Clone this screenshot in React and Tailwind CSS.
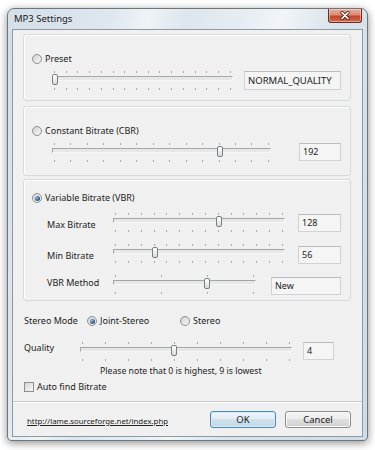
import React from 'react'

const Radio = ({ checked }) => (
  <span className="w-[10px] h-[10px] shrink-0 rounded-full border border-[#8c8e90] bg-linear-to-br from-[#cfd1d3] to-[#f9f9f9] flex items-center justify-center">
    {checked && (
      <span className="w-[5px] h-[5px] rounded-full bg-[radial-gradient(circle_at_35%_35%,#8dbbe6,#234f78_70%)]" />
    )}
  </span>
)

const Ticks = ({ count }) => (
  <div className="flex justify-between px-[2px]">
    {Array.from({ length: count }).map((_, i) => (
      <span key={i} className="w-px h-[2px] bg-[#a9abad]" />
    ))}
  </div>
)

// track + ticks, the thumb sits over the track
const Slider = ({ className, ticks, thumb }) => (
  <div className={`relative h-[20px] shrink-0 ${className}`}>
    <Ticks count={ticks} />
    <div className="mt-[3px] h-[5px] border border-[#a3a5a6] border-b-[#f7f7f7] border-r-[#f7f7f7] bg-[#e6e8e8]" />
    <div className="mt-[7px]">
      <Ticks count={ticks} />
    </div>
    <div
      className="absolute top-[3px] w-[6px] h-[11px] rounded-[2px] border border-[#7c7f82] bg-linear-to-b from-white to-[#d9dbdd]"
      style={{ left: thumb }}
    />
  </div>
)

const Field = ({ className, children }) => (
  <div className={`h-[18px] shrink-0 border border-[#d0d2d3] border-t-[#b9bbbd] bg-[#f5f5f5] pl-[3px] flex items-center ${className}`}>
    {children}
  </div>
)

const Group = ({ className, children }) => (
  <div className={`ml-[10px] w-[328px] shrink-0 rounded-[3px] border border-[#d6dadd] shadow-[inset_1px_1px_0_#ffffff] flex flex-col ${className}`}>
    {children}
  </div>
)

const Button = ({ primary, children }) => (
  <div
    className={`w-[66px] h-[17px] rounded-[3px] border flex items-center justify-center text-[9.5px] ${
      primary
        ? 'border-[#4a8ab8] bg-[linear-gradient(#eef6fb_0%,#e2edf4_50%,#d0e1ec_50%,#c4d8e6_100%)] shadow-[inset_0_0_0_1px_#d6ecf8]'
        : 'border-[#8a8c8e] bg-[linear-gradient(#f4f4f4_0%,#ececec_50%,#dedede_50%,#d2d2d2_100%)] shadow-[inset_0_0_0_1px_#fafafa]'
    }`}
  >
    {children}
  </div>
)

export default function App() {
  return (
    <div className="w-[375px] h-[450px] bg-white pt-[8px] pl-[7px] font-['Noto_Sans',sans-serif] text-[9px] leading-[12px] text-[#1c1c1c]">
      <div className="w-[361px] h-[433px] rounded-t-[7px] rounded-b-[4px] border border-[#6b767f] bg-[linear-gradient(105deg,#d3dee8_0%,#dfe7ee_22%,#eef3f6_30%,#dde6ed_38%,#e8eef3_52%,#f1f5f8_58%,#d9e3eb_70%,#cfdbe5_100%)] shadow-[0_2px_9px_rgba(0,0,0,0.45)] flex flex-col">
        {/* Title bar */}
        <div className="h-[20px] flex items-start justify-between shrink-0">
          <span className="pl-[6px] pt-[4px] text-[9.5px] text-[#1a1a1a]">MP3 Settings</span>
          <div className="mr-[5px] w-[34px] h-[14px] rounded-b-[3px] border border-t-0 border-[#6e2a1d] bg-[linear-gradient(#e7b0a2_0%,#d98c76_45%,#c2452b_55%,#d2694c_100%)] shadow-[inset_0_0_0_1px_rgba(255,220,210,0.5)] flex items-center justify-center">
            <svg width="10" height="9" viewBox="0 0 10 9">
              <path d="M2 1.5 L8 7.5 M8 1.5 L2 7.5" stroke="#5a1f14" strokeWidth="3.2" strokeLinecap="round" />
              <path d="M2 1.5 L8 7.5 M8 1.5 L2 7.5" stroke="#ffffff" strokeWidth="1.7" strokeLinecap="round" />
            </svg>
          </div>
        </div>

        {/* Client area */}
        <div className="mx-[4px] h-[408px] shrink-0 border border-[#8d99a3] bg-[#f0f0f0] flex flex-col">
          {/* Preset */}
          <Group className="mt-[4px] h-[67px]">
            <div className="mt-[18px] h-[12px] pl-[8px] flex items-center gap-[3px]">
              <Radio />
              <span>Preset</span>
            </div>
            <div className="mt-[6px] flex items-start">
              <Slider className="ml-[28px] w-[181px]" ticks={16} thumb={0} />
              <Field className="ml-[11px] w-[97px] h-[19px] text-[9.5px]">NORMAL_QUALITY</Field>
            </div>
          </Group>

          {/* CBR */}
          <Group className="mt-[5px] h-[70px]">
            <div className="mt-[18px] h-[12px] pl-[8px] flex items-center gap-[3px]">
              <Radio />
              <span>Constant Bitrate (CBR)</span>
            </div>
            <div className="mt-[6px] flex items-start">
              <Slider className="ml-[28px] w-[219px]" ticks={14} thumb={165} />
              <Field className="ml-[28px] w-[42px]">192</Field>
            </div>
          </Group>

          {/* VBR */}
          <Group className="mt-[3px] h-[122px]">
            <div className="mt-[12px] h-[12px] pl-[8px] flex items-center gap-[3px]">
              <Radio checked />
              <span>Variable Bitrate (VBR)</span>
            </div>
            <div className="mt-[9px] h-[20px] flex items-start">
              <span className="ml-[23px] w-[66px] mt-[6px]">Max Bitrate</span>
              <Slider className="w-[172px]" ticks={14} thumb={103} />
              <Field className="ml-[13px] w-[43px] mt-[1px]">128</Field>
            </div>
            <div className="mt-[11px] h-[20px] flex items-start">
              <span className="ml-[23px] w-[66px] mt-[6px]">Min Bitrate</span>
              <Slider className="w-[172px]" ticks={14} thumb={39} />
              <Field className="ml-[13px] w-[43px] mt-[2px]">56</Field>
            </div>
            <div className="mt-[11px] h-[20px] flex items-start">
              <span className="ml-[23px] w-[66px] mt-[2px]">VBR Method</span>
              <Slider className="w-[143px]" ticks={4} thumb={91} />
              <Field className="ml-[15px] w-[70px] mt-[2px]">New</Field>
            </div>
          </Group>

          {/* Stereo mode */}
          <div className="mt-[14px] ml-[11px] h-[12px] flex items-center">
            <span className="w-[63px]">Stereo Mode</span>
            <div className="w-[93px] flex items-center gap-[3px]">
              <Radio checked />
              <span>Joint-Stereo</span>
            </div>
            <div className="flex items-center gap-[3px]">
              <Radio />
              <span>Stereo</span>
            </div>
          </div>

          {/* Quality */}
          <div className="mt-[15px] ml-[11px] h-[20px] flex items-start">
            <span className="w-[56px]">Quality</span>
            <Slider className="w-[212px]" ticks={10} thumb={91} />
            <Field className="ml-[11px] w-[31px]">4</Field>
          </div>
          <div className="mt-[3px] ml-[87px] h-[12px] text-[8.7px]">Please note that 0 is highest, 9 is lowest</div>

          {/* Auto find */}
          <div className="mt-[4px] ml-[11px] h-[12px] flex items-center gap-[3px]">
            <span className="w-[10px] h-[10px] border border-[#8c8e90] bg-linear-to-br from-[#d3d5d7] to-[#f8f8f8]" />
            <span>Auto find Bitrate</span>
          </div>

          <div className="mt-[8px] h-[2px] border-t border-[#c9cbcd] border-b border-b-white" />

          {/* Bottom row */}
          <div className="mt-[8px] h-[17px] flex items-center">
            <span className="ml-[14px] pt-[3px] text-[7.8px] underline text-[#202020]">http://lame.sourceforge.net/index.php</span>
            <div className="flex-1" />
            <Button primary>OK</Button>
            <div className="ml-[9px] mr-[11px]">
              <Button>Cancel</Button>
            </div>
          </div>
        </div>
      </div>
    </div>
  )
}
